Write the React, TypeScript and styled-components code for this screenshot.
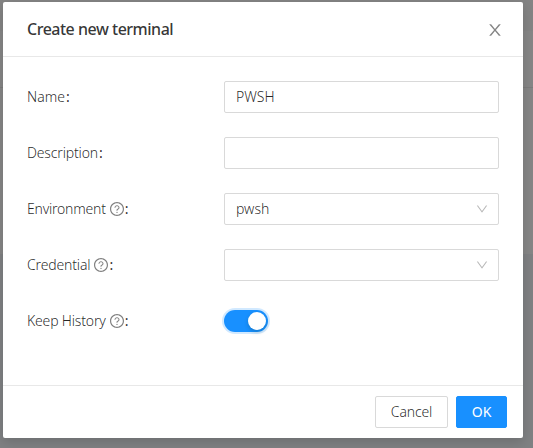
import React from 'react';
import styled, { createGlobalStyle } from 'styled-components';

const GlobalStyle = createGlobalStyle`
  * { box-sizing: border-box; }
  body {
    margin: 0;
    overflow: hidden;
    font-family: "Noto Sans", "Open Sans", sans-serif;
    font-size: 14px;
    font-weight: 300;
    line-height: 22px;
    color: rgba(0, 0, 0, 0.85);
  }
`;

const Backdrop = styled.div`
  height: 448px;
  padding: 2px 10px 10px 3px;
  background: linear-gradient(#848484 0 31px, #868686 31px 87px, #7c7c7c 87px 88px, #868686 88px 254px, #7f8183 254px);
`;

const Modal = styled.section`
  width: 520px;
  height: 436px;
  background: #fff;
  border-radius: 2px;
  box-shadow: 0 4px 12px rgba(0, 0, 0, 0.15);
`;

const Header = styled.header`
  display: flex;
  align-items: center;
  justify-content: space-between;
  height: 55px;
  padding: 0 20px 0 24px;
  border-bottom: 1px solid #e8e8e8;
`;

const Title = styled.h1`
  margin: 0;
  font-size: 16px;
  font-weight: 500;
  letter-spacing: -0.49px;
  color: rgba(0, 0, 0, 0.8);
`;

const IconButton = styled.button`
  display: flex;
  padding: 2px 0 0;
  border: 0;
  background: none;
  color: #858585;
`;

const Body = styled.div`
  display: grid;
  gap: 24px;
  height: 328px;
  padding: 24px;
  align-content: start;
`;

const Row = styled.div`
  display: grid;
  grid-template-columns: 197px 275px;
  align-items: center;
  height: 32px;
`;

const Label = styled.label`
  display: flex;
  align-items: center;
  white-space: nowrap;
`;

const LabelText = styled.span<{ $spacing: number }>`
  letter-spacing: ${p => p.$spacing}px;
`;

const Help = styled.svg`
  width: 14px;
  height: 14px;
  margin-left: 4px;
  fill: #808080;
`;

const Colon = styled.span`
  margin-left: 1px;
  font-weight: 400;
`;

const Field = styled.div`
  display: flex;
  align-items: center;
  justify-content: space-between;
  height: 32px;
  padding: 0 10px 0 11px;
  border: 1px solid #d9d9d9;
  border-radius: 2px;
`;

const Switch = styled.button`
  display: flex;
  justify-content: flex-end;
  width: 44px;
  height: 22px;
  padding: 2px;
  border: 0;
  border-radius: 11px;
  background: #1890ff;
  box-shadow: 0 0 0 2px rgba(24, 144, 255, 0.2);
`;

const Knob = styled.span`
  width: 18px;
  height: 18px;
  border-radius: 50%;
  background: #fff;
  box-shadow: 0 2px 4px rgba(0, 35, 11, 0.2);
`;

const Footer = styled.footer`
  display: flex;
  justify-content: flex-end;
  gap: 8px;
  height: 53px;
  padding: 10px 16px;
  border-top: 1px solid #e8e8e8;
`;

const Button = styled.button<{ $primary?: boolean }>`
  width: ${p => (p.$primary ? 51 : 73)}px;
  height: 32px;
  padding: 0;
  border: 1px solid ${p => (p.$primary ? '#1890ff' : '#d9d9d9')};
  border-radius: 2px;
  background: ${p => (p.$primary ? '#1890ff' : '#fff')};
  color: ${p => (p.$primary ? '#fff' : 'rgba(0, 0, 0, 0.85)')};
  font: inherit;
  font-weight: ${p => (p.$primary ? 400 : 300)};
  letter-spacing: -0.15px;
`;

const CloseIcon = () => (
  <svg width="16" height="16" viewBox="64 64 896 896" fill="currentColor">
    <path d="M563.8 512l262.5-312.9c4.4-5.2.7-13.1-6.1-13.1h-79.8c-4.7 0-9.2 2.1-12.3 5.7L511.6 449.8 295.1 191.7c-3-3.6-7.5-5.7-12.3-5.7H203c-6.8 0-10.5 7.9-6.1 13.1L459.4 512 196.9 824.9A7.95 7.95 0 0 0 203 838h79.8c4.7 0 9.2-2.1 12.3-5.7l216.5-258.1 216.5 258.1c3 3.6 7.5 5.7 12.3 5.7h79.8c6.8 0 10.5-7.9 6.1-13.1L563.8 512z" />
  </svg>
);

const ChevronIcon = () => (
  <svg width="12" height="12" viewBox="64 64 896 896" fill="#b8b8b8">
    <path d="M884 256h-75c-5.1 0-9.9 2.5-12.9 6.6L512 654.2 227.9 262.6c-3-4.1-7.8-6.6-12.9-6.6h-75c-6.5 0-10.3 7.4-6.5 12.7l352.6 486.1c12.8 17.6 39 17.6 51.7 0l352.6-486.1c3.9-5.3.1-12.7-6.4-12.7z" />
  </svg>
);

const HelpIcon = () => (
  <Help viewBox="64 64 896 896">
    <path d="M512 64C264.6 64 64 264.6 64 512s200.6 448 448 448 448-200.6 448-448S759.4 64 512 64zm0 820c-205.4 0-372-166.6-372-372s166.6-372 372-372 372 166.6 372 372-166.6 372-372 372z" />
    <path d="M623.6 316.7C593.6 290.4 554 276 512 276s-81.6 14.5-111.6 40.7C369.2 344 352 380.7 352 420v7.600c0 4.400 3.600 8 8 8h48c4.400 0 8-3.600 8-8V420c0-44.100 43.100-80 96-80s96 35.900 96 80c0 31.100-22 59.600-56.100 72.700-21.200 8.100-39.200 22.300-52.100 40.900-13.100 19-19.900 41.800-19.900 64.900V620c0 4.400 3.600 8 8 8h48c4.400 0 8-3.600 8-8v-22.700a48.300 48.300 0 0 1 30.900-44.800c59-22.700 97.100-74.700 97.100-132.500.1-39.300-17.100-76-48.300-103.300zM472 732a40 40 0 1 0 80 0 40 40 0 1 0-80 0z" />
  </Help>
);

interface RowProps {
  label: string;
  spacing?: number;
  help?: boolean;
  children: React.ReactNode;
}

const FormRow = ({ label, spacing = -0.22, help, children }: RowProps) => (
  <Row>
    <Label>
      <LabelText $spacing={spacing}>{label}</LabelText>
      {help && <HelpIcon />}
      <Colon>:</Colon>
    </Label>
    {children}
  </Row>
);

export default function App() {
  return (
    <Backdrop>
      <GlobalStyle />
      <Modal>
        <Header>
          <Title>Create new terminal</Title>
          <IconButton aria-label="Close"><CloseIcon /></IconButton>
        </Header>
        <Body>
          <FormRow label="Name" spacing={0}><Field>PWSH</Field></FormRow>
          <FormRow label="Description" spacing={-0.16}><Field /></FormRow>
          <FormRow label="Environment" help><Field>pwsh<ChevronIcon /></Field></FormRow>
          <FormRow label="Credential" spacing={-0.15} help><Field><span /><ChevronIcon /></Field></FormRow>
          <FormRow label="Keep History" spacing={-0.18} help><Switch role="switch" aria-checked="true"><Knob /></Switch></FormRow>
        </Body>
        <Footer>
          <Button>Cancel</Button>
          <Button $primary>OK</Button>
        </Footer>
      </Modal>
    </Backdrop>
  );
}
